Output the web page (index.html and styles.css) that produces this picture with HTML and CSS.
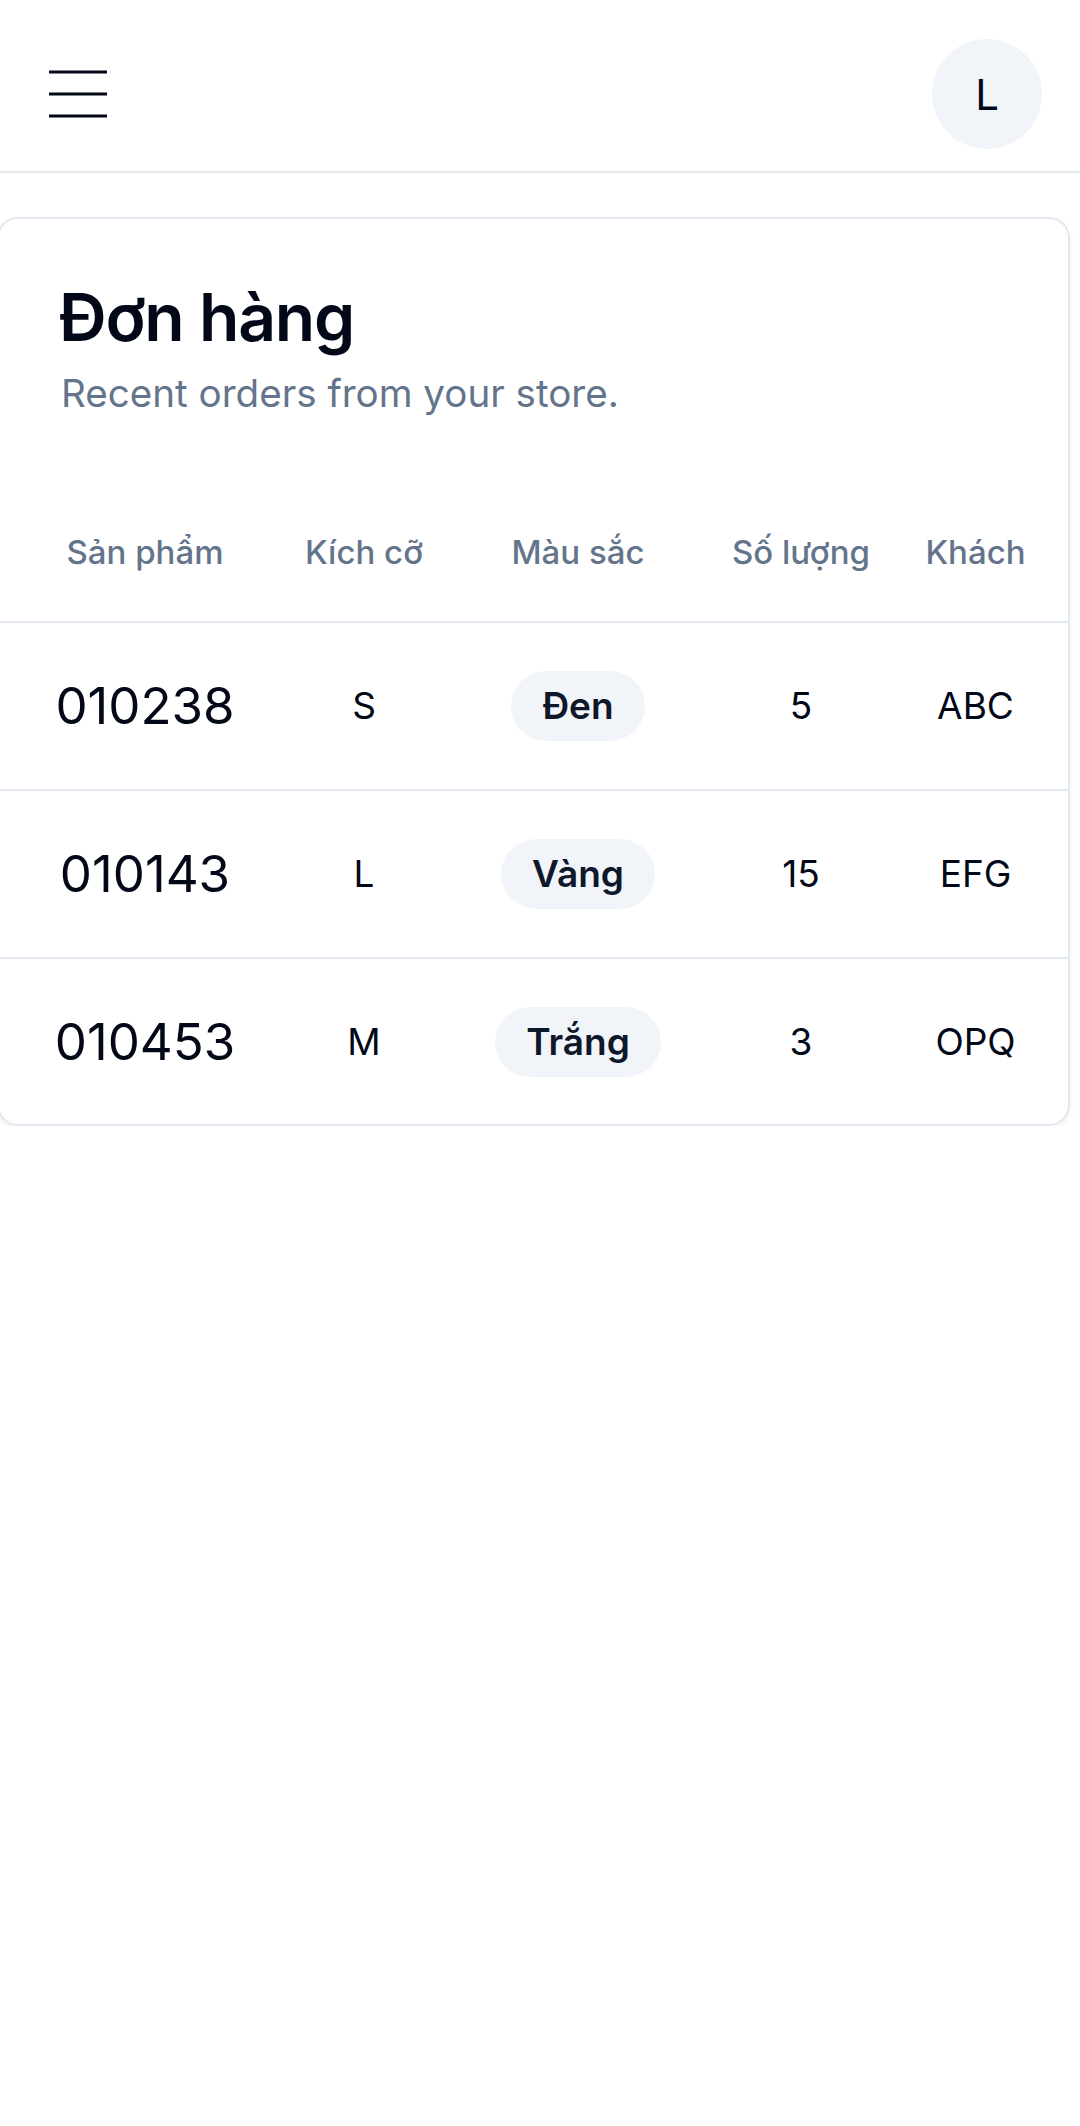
FILE: index.html
```html
<!DOCTYPE html>
<html lang="vi">
<head>
<meta charset="utf-8">
<title>Đơn hàng</title>
<link rel="stylesheet" href="styles.css">
</head>
<body>
<header class="topbar">
  <button class="menu-btn" aria-label="Menu">
    <svg width="58" height="50" viewBox="0 0 58 50">
      <line x1="0" y1="3" x2="58" y2="3" />
      <line x1="0" y1="25" x2="58" y2="25" />
      <line x1="0" y1="47" x2="58" y2="47" />
    </svg>
  </button>
  <div class="avatar">L</div>
</header>

<main>
  <section class="card">
    <div class="card-header">
      <h1 class="card-title">Đơn hàng</h1>
      <p class="card-desc">Recent orders from your store.</p>
    </div>
    <div class="table">
      <div class="row head">
        <div class="cell">Sản phẩm</div>
        <div class="cell">Kích cỡ</div>
        <div class="cell">Màu sắc</div>
        <div class="cell">Số lượng</div>
        <div class="cell">Khách</div>
      </div>
      <div class="row">
        <div class="cell code">010238</div>
        <div class="cell">S</div>
        <div class="cell"><span class="badge">Đen</span></div>
        <div class="cell">5</div>
        <div class="cell">ABC</div>
      </div>
      <div class="row">
        <div class="cell code">010143</div>
        <div class="cell">L</div>
        <div class="cell"><span class="badge">Vàng</span></div>
        <div class="cell">15</div>
        <div class="cell">EFG</div>
      </div>
      <div class="row">
        <div class="cell code">010453</div>
        <div class="cell">M</div>
        <div class="cell"><span class="badge">Trắng</span></div>
        <div class="cell">3</div>
        <div class="cell">OPQ</div>
      </div>
    </div>
  </section>
</main>
</body>
</html>
```

FILE: styles.css
```css
* { box-sizing: border-box; }

html, body {
  margin: 0;
  padding: 0;
  background: #ffffff;
  font-family: Inter, "Noto Sans", sans-serif;
  color: #020817;
}

.topbar {
  height: 173px;
  padding: 17px 38px 0 49px;
  border-bottom: 2px solid #e5e7eb;
  display: flex;
  align-items: center;
  justify-content: space-between;
}

.menu-btn {
  border: 0;
  background: none;
  padding: 0;
  display: flex;
}

.menu-btn svg line {
  stroke: #020817;
  stroke-width: 3;
}

.avatar {
  width: 110px;
  height: 110px;
  border-radius: 50%;
  background: #f1f5f9;
  display: flex;
  align-items: center;
  justify-content: center;
  font-size: 42px;
  color: #020817;
}

main {
  padding-top: 44px;
}

.card {
  width: 1073px;
  margin-left: -3px;
  border: 2px solid #e2e8f0;
  border-radius: 21px;
  background: #fff;
  box-shadow: 0 3px 6px rgba(15, 23, 42, 0.05);
  overflow: hidden;
}

.card-header {
  padding: 65px 60px 64px 60px;
}

.card-title {
  margin: 0;
  font-size: 66px;
  line-height: 66px;
  font-weight: 600;
  letter-spacing: -1.2px;
  color: #020817;
}

.card-desc {
  margin: 17px 0 0 2px;
  font-size: 38.6px;
  line-height: 52px;
  color: #64748b;
}

.row {
  display: grid;
  grid-template-columns: 292px 146px 282px 164px 185px;
  align-items: center;
  height: 168px;
  border-bottom: 2px solid #e2e8f0;
}

.row:last-child {
  border-bottom: 0;
  height: 165px;
}

.row.head {
  height: 140px;
}

.cell {
  text-align: center;
  font-size: 37px;
  line-height: 52px;
  color: #020817;
}

.head .cell {
  font-size: 33px;
  line-height: 48px;
  font-weight: 500;
  color: #64748b;
}

.cell.code {
  font-size: 51px;
  line-height: 60px;
}

.badge {
  display: inline-block;
  padding: 9px 31px;
  border-radius: 999px;
  background: #f1f5f9;
  color: #0f172a;
  font-weight: 600;
  font-size: 37px;
  line-height: 52px;
}
```
